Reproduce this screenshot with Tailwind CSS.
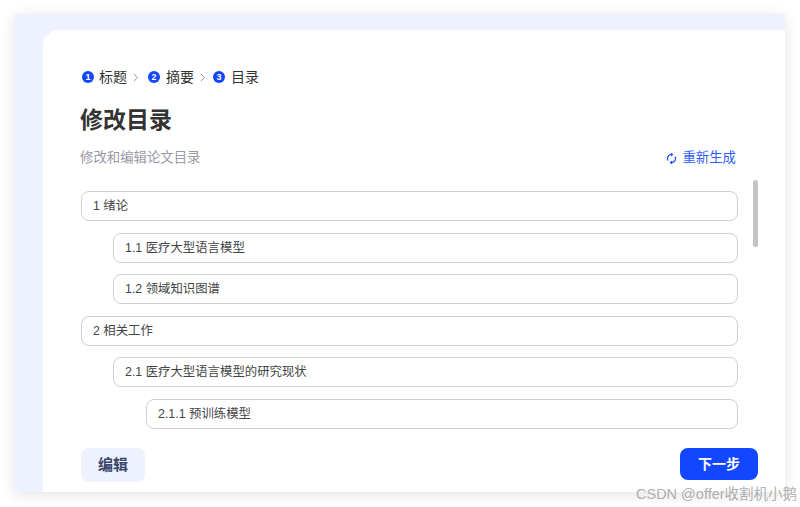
<!DOCTYPE html>
<html lang="zh">
<head>
<meta charset="utf-8">
<script src="https://cdn.jsdelivr.net/npm/@tailwindcss/browser@4"></script>
</head>
<body class="bg-white overflow-hidden">
<div class="relative w-[800px] h-[507px] pt-[14px] pl-[14px] overflow-hidden font-['Liberation_Sans','Noto_Sans_CJK_SC',sans-serif]">
  <div class="w-[771px] h-[478px] bg-[#eef2fe] pt-[16px] pl-[29px] shadow-[0_3px_14px_rgba(0,0,0,0.11)]">
    <div class="w-[742px] h-[462px] bg-white rounded-tl-[16px] pl-[38px] pt-[38px] flex flex-col">
      <div class="flex items-center h-[18px] ml-[1px] text-[14px] text-[#333] leading-[18px]">
        <span class="w-[12px] h-[12px] rounded-full bg-[#1246ff] text-white text-[9px] font-bold flex items-center justify-center leading-none">1</span>
        <span class="ml-[5px]">标题</span>
        <svg class="ml-[6px] mr-[9px]" width="6" height="9" viewBox="0 0 6 9" fill="none" stroke="#999" stroke-width="1"><path d="M1 1l3.5 3.5L1 8"/></svg>
        <span class="w-[12px] h-[12px] rounded-full bg-[#1246ff] text-white text-[9px] font-bold flex items-center justify-center leading-none">2</span>
        <span class="ml-[6px]">摘要</span>
        <svg class="ml-[6px] mr-[7px]" width="6" height="9" viewBox="0 0 6 9" fill="none" stroke="#999" stroke-width="1"><path d="M1 1l3.5 3.5L1 8"/></svg>
        <span class="w-[12px] h-[12px] rounded-full bg-[#1246ff] text-white text-[9px] font-bold flex items-center justify-center leading-none">3</span>
        <span class="ml-[6px]">目录</span>
      </div>
      <h1 class="mt-[18px] -ml-[1px] h-[32px] leading-[32px] text-[23px] font-bold text-[#333]">修改目录</h1>
      <div class="mt-[12px] -ml-[1px] h-[20px] w-[656px] flex items-center justify-between">
        <span class="text-[13.4px] leading-[20px] text-[#9a9aa5]">修改和编辑论文目录</span>
        <span class="flex items-center gap-[5px] text-[13.4px] leading-[20px] text-[#2f5cff]">
          <svg width="11" height="11" viewBox="0 0 12 12" fill="none" stroke="#1f4fff" stroke-width="1.4"><path d="M2.2 8.2A4.4 4.4 0 0 1 6.8 1.7"/><path d="M9.8 3.8A4.4 4.4 0 0 1 5.2 10.3"/><path d="M5.6 0.2l1.6 1.5-1.6 1.5" stroke-width="1.2"/><path d="M6.4 8.8l-1.6 1.5 1.6 1.5" stroke-width="1.2"/></svg>
          重新生成
        </span>
      </div>
      <div class="relative mt-[12px] h-[253px] w-[677px] pt-[11px] overflow-hidden">
        <div class="flex flex-col gap-[11.6px] w-[657px] text-[12.4px] text-[#444]">
          <div class="h-[30px] leading-[28px] rounded-[8px] border border-[#cfcfd6] px-[11px]">1 绪论</div>
          <div class="h-[30px] leading-[28px] rounded-[8px] border border-[#cfcfd6] px-[11px] ml-[32px]">1.1 医疗大型语言模型</div>
          <div class="h-[30px] leading-[28px] rounded-[8px] border border-[#cfcfd6] px-[11px] ml-[32px]">1.2 领域知识图谱</div>
          <div class="h-[30px] leading-[28px] rounded-[8px] border border-[#cfcfd6] px-[11px]">2 相关工作</div>
          <div class="h-[30px] leading-[28px] rounded-[8px] border border-[#cfcfd6] px-[11px] ml-[32px]">2.1 医疗大型语言模型的研究现状</div>
          <div class="h-[30px] leading-[28px] rounded-[8px] border border-[#cfcfd6] px-[11px] ml-[65px]">2.1.1 预训练模型</div>
        </div>
        <div class="absolute left-[672px] top-0 w-[5px] h-[67px] rounded-full bg-[#c4c4c4]"></div>
      </div>
      <div class="mt-[15px] w-[677px] flex items-start justify-between">
        <button class="w-[64px] h-[34px] rounded-[8px] bg-[#eef2fe] text-[15px] font-bold text-[#3a4568]">编辑</button>
        <button class="w-[78px] h-[32px] rounded-[8px] bg-[#1246ff] text-[14px] font-bold text-white">下一步</button>
      </div>
    </div>
  </div>
  <div class="absolute left-[636px] top-[485px] text-[14.5px] leading-[18px] text-[#9a9a9a]/80 whitespace-nowrap">CSDN @offer收割机小鹅</div>
</div>
</body>
</html>
